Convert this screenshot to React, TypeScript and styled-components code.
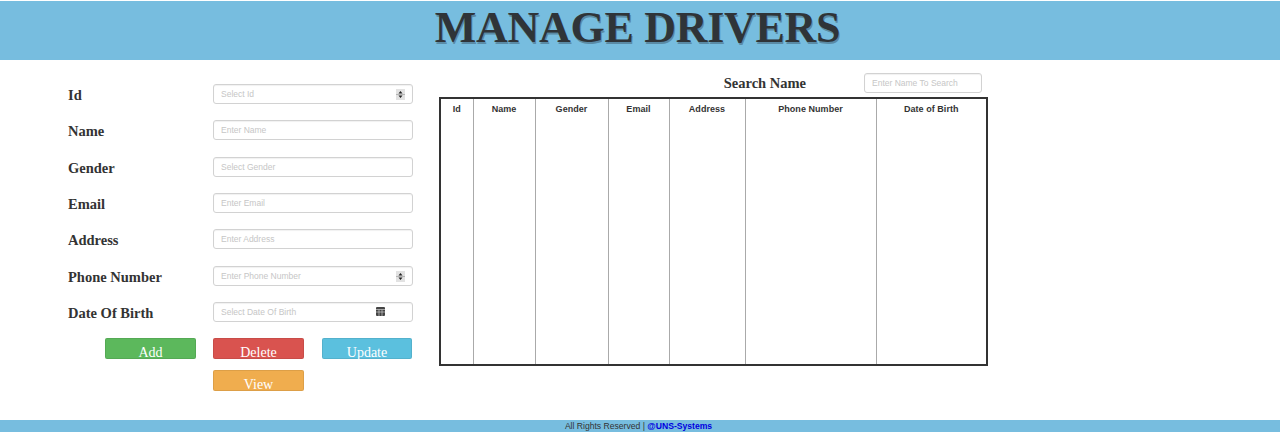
import React from 'react'
import styled, { createGlobalStyle } from 'styled-components'

const GlobalStyle = createGlobalStyle`
    html, body {
        margin: 0;
        padding: 0;
        background: white;
    }
    * {
        box-sizing: border-box;
    }
`

const PageLayout = styled.div`
    display: flex;
    flex-direction: column;
    width: 1280px;
    height: 433px;
    overflow: hidden;
    padding: 1px 0;
    color: #333;
    font-family: "Liberation Serif", serif;
`

const PageHeader = styled.header`
    display: flex;
    height: 59px;
    justify-content: center;
    align-items: center;
    background-color: #77bddf;
`

const Title = styled.h1`
    margin: 0 5px 6px 0;
    font-family: "Liberation Serif", serif;
    font-size: 44px;
    line-height: 50px;
    font-weight: 700;
    letter-spacing: -0.3px;
    color: #2f3438;
    text-shadow: 1px 2px 0 #5a8ba6;
    white-space: nowrap;
`

const PageBody = styled.main`
    display: flex;
    flex: 1;
    gap: 26px;
    padding: 13px 0 0 68px;
`

const FormColumn = styled.form`
    display: flex;
    flex-direction: column;
    width: 345px;
    padding-top: 11px;
`

const FormRow = styled.div`
    display: flex;
    align-items: center;
    height: 20px;
    margin-bottom: 16.33px;
`

const Label = styled.label`
    width: 145px;
    padding-top: 2px;
    font-size: 14.5px;
    font-weight: 700;
    line-height: 20px;
    color: #333;
`

const Field = styled.div`
    position: relative;
    width: 200px;
    height: 20px;
`

const TextInput = styled.input`
    display: block;
    width: 100%;
    height: 100%;
    padding: 0 7px;
    border: 1px solid #d2d2d2;
    border-radius: 3px;
    background: white;
    box-shadow: inset 0 1px 1px rgba(0, 0, 0, 0.06);
    font-family: "Liberation Sans", sans-serif;
    font-size: 8.5px;
    outline: none;

    &::placeholder {
        color: #c6c6c6;
        opacity: 1;
    }
`

const FieldIcon = styled.svg<{ $right: number }>`
    position: absolute;
    top: 5px;
    right: ${(p) => p.$right}px;
`

const ButtonGrid = styled.div`
    display: grid;
    grid-template-columns: 108px 109px 90px;
    row-gap: 11px;
    margin: -0.3px 0 0 37px;
`

const ActionButton = styled.button<{ $bg: string; $col?: number }>`
    grid-column: ${(p) => p.$col ?? 'auto'};
    width: 91px;
    max-width: 100%;
    height: 21px;
    padding: 7px 0 0;
    border: 1px solid rgba(0, 0, 0, 0.08);
    border-radius: 2px;
    background-color: ${(p) => p.$bg};
    color: white;
    font-family: "Liberation Serif", serif;
    font-size: 14px;
    line-height: 14px;
`

const TableColumn = styled.section`
    display: flex;
    flex-direction: column;
    width: 549px;
`

const SearchBar = styled.div`
    display: flex;
    height: 24px;
    justify-content: flex-end;
    align-items: flex-start;
    padding-right: 6px;
`

const SearchLabel = styled.label`
    margin-right: 58px;
    font-size: 14.5px;
    font-weight: 700;
    line-height: 20px;
    color: #333;
`

const SearchField = styled.div`
    width: 118px;
    height: 20px;
`

const DriverTable = styled.table`
    width: 547px;
    height: 269px;
    border: 2px solid #333;
    border-collapse: collapse;
    table-layout: fixed;
`

const HeadCell = styled.th<{ $width: number }>`
    width: ${(p) => p.$width}px;
    height: 20px;
    padding: 0;
    border-left: 1px solid #aaa;
    color: #333;
    font-family: "Liberation Sans", sans-serif;
    font-size: 9px;
    font-weight: 700;
    letter-spacing: 0.05px;
    text-align: center;
`

const BodyCell = styled.td`
    padding: 0;
    border-left: 1px solid #aaa;
`

const PageFooter = styled.footer`
    display: flex;
    height: 12px;
    justify-content: center;
    align-items: center;
    padding-right: 3px;
    background-color: #77bddf;
    color: #333;
    font-family: "Liberation Sans", sans-serif;
    font-size: 8.6px;
    white-space: pre;
`

const FooterLink = styled.a`
    color: #0000e0;
    font-weight: 700;
`

const fields = [
    { label: 'Id', placeholder: 'Select Id', icon: 'spin' },
    { label: 'Name', placeholder: 'Enter Name' },
    { label: 'Gender', placeholder: 'Select Gender' },
    { label: 'Email', placeholder: 'Enter Email' },
    { label: 'Address', placeholder: 'Enter Address' },
    { label: 'Phone Number', placeholder: 'Enter Phone Number', icon: 'spin' },
    { label: 'Date Of Birth', placeholder: 'Select Date Of Birth', icon: 'date' },
]

const columns = [
    { name: 'Id', width: 33 },
    { name: 'Name', width: 62 },
    { name: 'Gender', width: 73 },
    { name: 'Email', width: 61 },
    { name: 'Address', width: 76 },
    { name: 'Phone Number', width: 131 },
    { name: 'Date of Birth', width: 111 },
]

function SpinIcon() {
    return (
        <FieldIcon $right={8} width="9" height="11" viewBox="0 0 9 11">
            <rect width="9" height="11" fill="#e2e2e2" />
            <rect y="5" width="9" height="1" fill="#b5b5b5" />
            <path d="M4.5 2 L6.5 4.5 H2.5 Z M2.5 6.5 H6.5 L4.5 9 Z" fill="#222" />
        </FieldIcon>
    )
}

function DateIcon() {
    return (
        <FieldIcon $right={28} width="9" height="9" viewBox="0 0 9 9">
            <rect width="9" height="9" rx="1" fill="#444" />
            <path d="M0 2.5 H9 M0 5 H9 M3 2.5 V9 M6 2.5 V9" stroke="#ccc" strokeWidth="0.7" />
        </FieldIcon>
    )
}

function App() {
    return (
        <PageLayout>
            <GlobalStyle />
            <PageHeader>
                <Title>MANAGE DRIVERS</Title>
            </PageHeader>

            <PageBody>
                <FormColumn>
                    {fields.map((item) => (
                        <FormRow key={item.label}>
                            <Label>{item.label}</Label>
                            <Field>
                                <TextInput placeholder={item.placeholder} />
                                {item.icon === 'spin' && <SpinIcon />}
                                {item.icon === 'date' && <DateIcon />}
                            </Field>
                        </FormRow>
                    ))}
                    <ButtonGrid>
                        <ActionButton type="button" $bg="#5cb85c">Add</ActionButton>
                        <ActionButton type="button" $bg="#d9534f">Delete</ActionButton>
                        <ActionButton type="button" $bg="#5bc0de">Update</ActionButton>
                        <ActionButton type="button" $bg="#f0ad4e" $col={2}>View</ActionButton>
                    </ButtonGrid>
                </FormColumn>

                <TableColumn>
                    <SearchBar>
                        <SearchLabel>Search Name</SearchLabel>
                        <SearchField>
                            <TextInput placeholder="Enter Name To Search" />
                        </SearchField>
                    </SearchBar>
                    <DriverTable>
                        <thead>
                            <tr>
                                {columns.map((col) => (
                                    <HeadCell key={col.name} $width={col.width}>{col.name}</HeadCell>
                                ))}
                            </tr>
                        </thead>
                        <tbody>
                            <tr>
                                {columns.map((col) => (
                                    <BodyCell key={col.name} />
                                ))}
                            </tr>
                        </tbody>
                    </DriverTable>
                </TableColumn>
            </PageBody>

            <PageFooter>
                All Rights Reserved | <FooterLink>@UNS-Systems</FooterLink>
            </PageFooter>
        </PageLayout>
    )
}

export default App
